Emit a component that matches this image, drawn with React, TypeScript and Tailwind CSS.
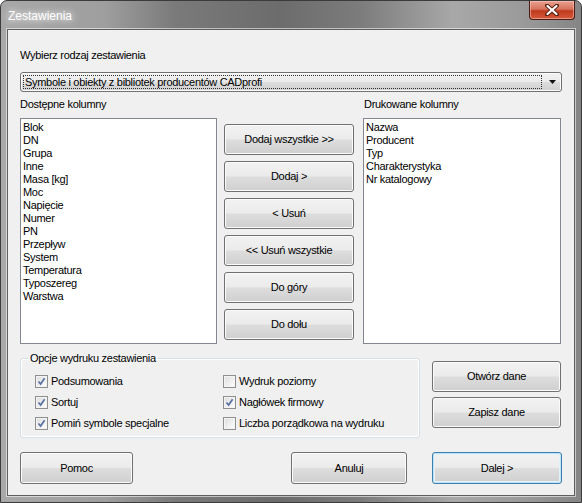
import type { ReactNode } from 'react';
import clsx from 'clsx';

const available = [
  'Blok', 'DN', 'Grupa', 'Inne', 'Masa [kg]', 'Moc', 'Napięcie', 'Numer',
  'PN', 'Przepływ', 'System', 'Temperatura', 'Typoszereg', 'Warstwa',
];
const printed = ['Nazwa', 'Producent', 'Typ', 'Charakterystyka', 'Nr katalogowy'];

const Btn = ({ children, className, primary }: { children: ReactNode; className?: string; primary?: boolean }) => (
  <div
    className={clsx(
      'flex items-center justify-center rounded-[3px] border text-black',
      'bg-[linear-gradient(#f2f2f2_0%,#ebebeb_48%,#dddddd_52%,#cfcfcf_100%)]',
      primary
        ? 'border-[#3c7fb1] shadow-[inset_0_0_0_1px_#c2e3f6,inset_0_0_0_2px_#e3f1fa]'
        : 'border-[#707070] shadow-[inset_0_0_0_1px_#fbfbfb]',
      className,
    )}
  >
    {children}
  </div>
);

const Check = ({ checked, label }: { checked?: boolean; label: string }) => (
  <div className="flex h-[21px] items-center">
    <div className="flex h-[13px] w-[13px] items-center justify-center border border-[#8e8f8f] bg-[linear-gradient(135deg,#dcdcdc,#ffffff)] shadow-[inset_0_0_0_1px_#f4f4f4]">
      {checked && (
        <svg width="9" height="9" viewBox="0 0 9 9">
          <path d="M1.5 4.5 L3.6 7 L7.6 1.2" fill="none" stroke="#5a72a3" strokeWidth="1.7" />
        </svg>
      )}
    </div>
    <span className="ml-[3px]">{label}</span>
  </div>
);

const ListBox = ({ items, className }: { items: string[]; className?: string }) => (
  <div className={clsx('h-[226px] border border-[#828790] bg-white px-[2px] pt-[2px]', className)}>
    {items.map((it) => (
      <div key={it} className="h-[13px] leading-[13px]">{it}</div>
    ))}
  </div>
);

export default function App() {
  return (
    <div className="h-[503px] w-[582px] overflow-hidden rounded-t-[7px] border border-[#3b3b3b] bg-[linear-gradient(90deg,#a8a8a8_0%,#9e9e9e_18%,#7a7a7a_30%,#6c6c6c_48%,#7c7c7c_62%,#a8a8a8_78%,#9a9a9a_90%,#858585_100%)] font-['Liberation_Sans',Arial,sans-serif] text-[11px] tracking-[-0.3px] text-black">
      {/* title bar */}
      <div className="flex h-[28px] items-start justify-between">
        <div className="ml-[7px] mt-[6px] text-[12px] tracking-normal text-white [text-shadow:0_0_6px_rgba(255,255,255,0.9),0_0_10px_rgba(255,255,255,0.6)]">
          Zestawienia
        </div>
        <div className="mr-[6px] flex h-[19px] w-[46px] items-center justify-center rounded-b-[4px] border border-t-0 border-[#4a1a14] bg-[linear-gradient(#e8a18f_0%,#d5735d_45%,#c0391d_55%,#d45a3c_100%)] shadow-[inset_0_0_0_1px_rgba(255,210,200,0.5)]">
          <svg width="14" height="12" viewBox="0 0 14 12">
            <path d="M2 1.5 L12 10.5 M12 1.5 L2 10.5" stroke="#5a1d12" strokeWidth="4" strokeLinecap="round" />
            <path d="M2.5 2 L11.5 10 M11.5 2 L2.5 10" stroke="#ffffff" strokeWidth="2.2" strokeLinecap="round" />
          </svg>
        </div>
      </div>

      {/* client area */}
      <div className="mx-[6px] h-[467px] border border-[#5e5e5e] bg-[#f0f0f0] px-[12px] pt-[18px] shadow-[0_0_0_1px_rgba(255,255,255,0.55)]">
        <div className="h-[14px] leading-[14px]">Wybierz rodzaj zestawienia</div>

        {/* combo box */}
        <div className="mt-[10px] flex h-[20px] items-center rounded-[3px] border border-[#707070] bg-[linear-gradient(#f2f2f2_0%,#ebebeb_48%,#dddddd_52%,#cfcfcf_100%)] pl-[2px] pr-[5px] shadow-[inset_0_0_0_1px_#fbfbfb]">
          <div className="flex h-[14px] flex-1 items-center border border-dotted border-[#333] pl-[1px] leading-[13px]">
            Symbole i obiekty z bibliotek producentów CADprofi
          </div>
          <div className="ml-[6px] flex w-[8px] justify-center">
            <svg width="7" height="4" viewBox="0 0 7 4">
              <path d="M0 0 H7 L3.5 4 Z" fill="#111" />
            </svg>
          </div>
        </div>

        {/* columns */}
        <div className="mt-[5px] flex">
          <div className="w-[197px]">
            <div className="h-[14px] leading-[14px]">Dostępne kolumny</div>
            <ListBox items={available} className="mt-[7px]" />
          </div>
          <div className="ml-[7px] flex w-[130px] flex-col gap-[6px] pt-[27px]">
            <Btn className="h-[31px]">Dodaj wszystkie &gt;&gt;</Btn>
            <Btn className="h-[31px]">Dodaj &gt;</Btn>
            <Btn className="h-[31px]">&lt; Usuń</Btn>
            <Btn className="h-[31px]">&lt;&lt; Usuń wszystkie</Btn>
            <Btn className="h-[31px]">Do góry</Btn>
            <Btn className="h-[31px]">Do dołu</Btn>
          </div>
          <div className="ml-[9px] w-[198px]">
            <div className="h-[14px] pl-[1px] leading-[14px]">Drukowane kolumny</div>
            <ListBox items={printed} className="mt-[7px]" />
          </div>
        </div>

        {/* options */}
        <div className="mt-[7px] flex">
          <fieldset className="h-[87px] w-[400px] rounded-[3px] border border-[#d5dfe5] px-[7px] shadow-[inset_0_0_0_1px_#ffffff]">
            <legend className="px-[2px] leading-[14px]">Opcje wydruku zestawienia</legend>
            <div className="grid grid-cols-[188px_1fr] pl-[7px] pt-[6px]">
              <div>
                <Check checked label="Podsumowania" />
                <Check checked label="Sortuj" />
                <Check checked label="Pomiń symbole specjalne" />
              </div>
              <div>
                <Check label="Wydruk poziomy" />
                <Check checked label="Nagłówek firmowy" />
                <Check label="Liczba porządkowa na wydruku" />
              </div>
            </div>
          </fieldset>
          <div className="ml-[12px] mt-[10px] flex flex-col gap-[5px]">
            <Btn className="h-[31px] w-[129px]">Otwórz dane</Btn>
            <Btn className="h-[31px] w-[129px]">Zapisz dane</Btn>
          </div>
        </div>

        {/* bottom buttons */}
        <div className="mt-[14px] flex">
          <Btn className="h-[32px] w-[113px]">Pomoc</Btn>
          <Btn className="ml-auto h-[32px] w-[116px]">Anuluj</Btn>
          <Btn primary className="ml-[25px] h-[32px] w-[130px]">Dalej &gt;</Btn>
        </div>
      </div>
    </div>
  );
}
